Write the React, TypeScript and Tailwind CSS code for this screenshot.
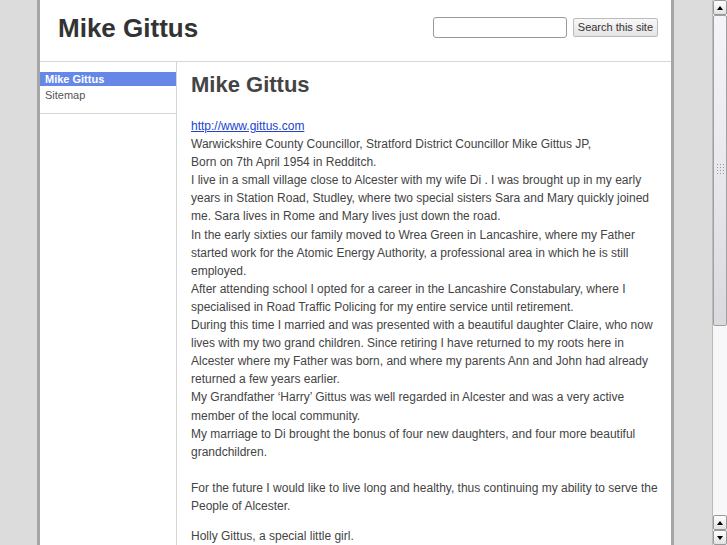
const paragraphs: string[] = [
  'Warwickshire County Councillor, Stratford District Councillor Mike Gittus JP,',
  'Born on 7th April 1954 in Redditch.',
  'I live in a small village close to Alcester with my wife Di . I was brought up in my early years in Station Road, Studley, where two special sisters Sara and Mary quickly joined me. Sara lives in Rome and Mary lives just down the road.',
  'In the early sixties our family moved to Wrea Green in Lancashire, where my Father started work for the Atomic Energy Authority, a professional area in which he is still employed.',
  'After attending school I opted for a career in the Lancashire Constabulary, where I specialised in Road Traffic Policing for my entire service until retirement.',
  'During this time I married and was presented with a beautiful daughter Claire, who now lives with my two grand children. Since retiring I have returned to my roots here in Alcester where my Father was born, and where my parents Ann and John had already returned a few years earlier.',
  'My Grandfather \u2018Harry\u2019 Gittus was well regarded in Alcester and was a very active member of the local community.',
  'My marriage to Di brought the bonus of four new daughters, and four more beautiful grandchildren.',
];

function ArrowButton({ down }: { down?: boolean }) {
  return (
    <div className="h-[15px] flex items-center justify-center border border-[#999] rounded-[2px] bg-gradient-to-b from-white to-[#e2e2e2]">
      {down ? (
        <div className="w-0 h-0 border-l-[3px] border-r-[3px] border-t-[4px] border-l-transparent border-r-transparent border-t-black" />
      ) : (
        <div className="w-0 h-0 border-l-[3px] border-r-[3px] border-b-[4px] border-l-transparent border-r-transparent border-b-black" />
      )}
    </div>
  );
}

function Scrollbar() {
  return (
    <div className="w-[15px] h-full flex flex-col bg-[#f4f4f6] border-l border-[#bbb]">
      <ArrowButton />
      <div className="h-[311px] border border-[#a0a0a0] rounded-[2px] bg-gradient-to-b from-[#f4f5f9] via-[#e8e9ed] to-[#d8dade] flex items-center justify-center">
        <div className="grid grid-cols-3 gap-[2px] -mt-[4px]">
          {Array.from({ length: 12 }).map((_, i) => (
            <div key={i} className="w-[1px] h-[1px] bg-[#9a9a9a]" />
          ))}
        </div>
      </div>
      <div className="flex-1 bg-[#f7f7f9]" />
      <ArrowButton />
      <ArrowButton down />
    </div>
  );
}

export default function App() {
  return (
    <div className="w-[727px] h-[545px] overflow-hidden flex bg-[#dcdcdc] font-['Liberation_Sans',Arial,sans-serif] text-[#444]">
      <div className="flex-1 h-full overflow-hidden pl-[37px]">
        <div className="w-[637px] min-h-full bg-white border-l-[3px] border-r-[3px] border-l-[#a6a6a6] border-r-[#a6a6a6]">
          {/* Header */}
          <div className="h-[62px] flex items-center justify-between pl-[18px] pr-[13px] border-b border-[#d6d6d6]">
            <h1 className="text-[26px] font-bold text-[#333] leading-none -mt-[6px]">Mike Gittus</h1>
            <div className="flex items-center gap-[6px] -mt-[6px]">
              <input className="w-[134px] h-[21px] border border-[#999] rounded-[3px] bg-white" />
              <button className="h-[19px] px-[4px] text-[11px] text-[#333] border border-[#bbb] rounded-[2px] bg-gradient-to-b from-[#f8f8f8] to-[#e4e4e4]">
                Search this site
              </button>
            </div>
          </div>

          <div className="flex">
            {/* Sidebar */}
            <div className="w-[137px] shrink-0 self-start">
              <div className="pt-[10px] pb-[9px] border-b border-[#d6d6d6]">
                <div className="h-[14px] leading-[14px] px-[5px] bg-[#6487e8] text-white text-[11px] font-bold">Mike Gittus</div>
                <div className="h-[18px] leading-[18px] px-[5px] text-[11px] text-[#555]">Sitemap</div>
              </div>
            </div>

            {/* Content */}
            <div className="flex-1 pl-[14px] pr-[10px] min-h-[500px] -ml-px border-l border-[#d6d6d6]">
              <h2 className="text-[22px] font-bold text-[#444] leading-none pt-[12px] pb-[21px]">Mike Gittus</h2>
              <div className="text-[12px] leading-[18.1px]">
                <a className="text-[#2244cc] underline">http://www.gittus.com</a>
                {paragraphs.map((p, i) => (
                  <div key={i}>{p}</div>
                ))}
                <div className="h-[18.5px]" />
                <div>For the future I would like to live long and healthy, thus continuing my ability to serve the People of Alcester.</div>
                <div className="mt-[12px]">Holly Gittus, a special little girl.</div>
              </div>
            </div>
          </div>
        </div>
      </div>
      <Scrollbar />
    </div>
  );
}
